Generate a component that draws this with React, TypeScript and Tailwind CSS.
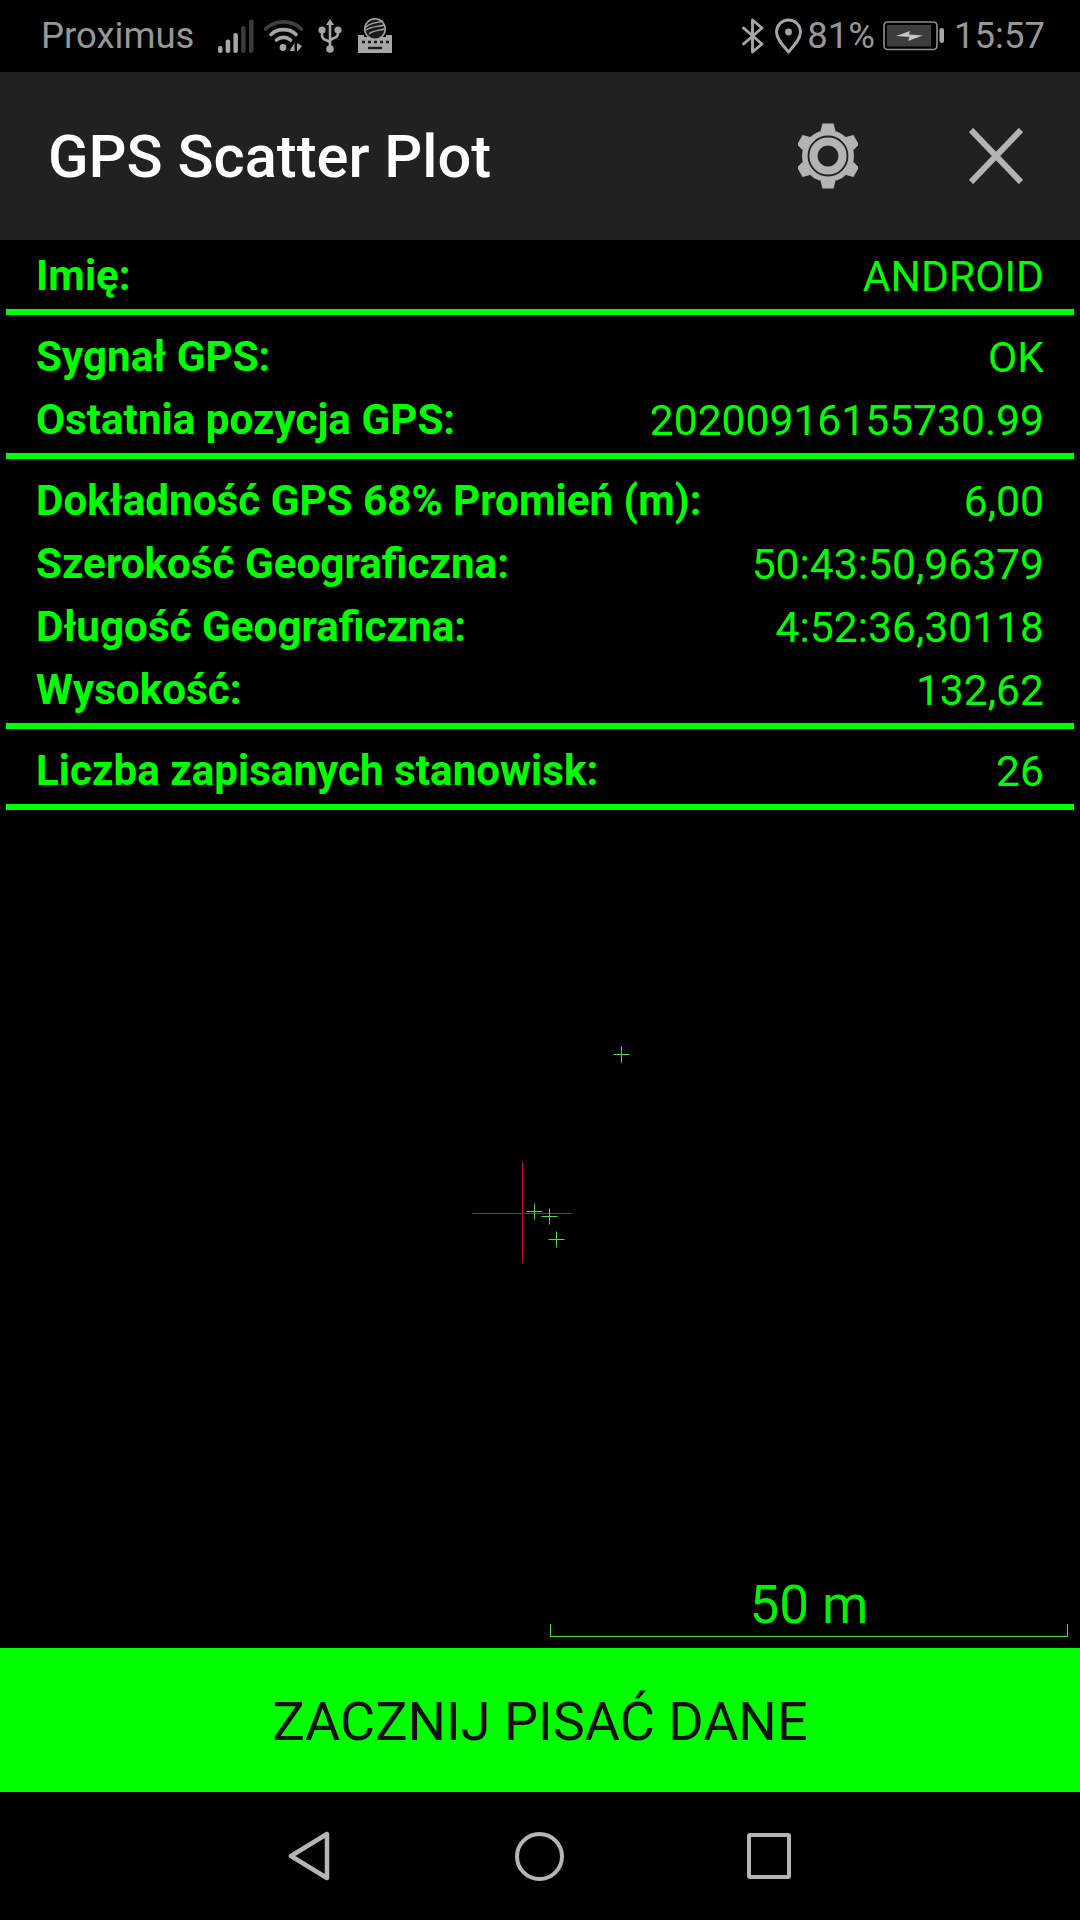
const font = { fontFamily: 'Roboto, sans-serif' };

function Row({ label, value }: { label: string; value: string }) {
  return (
    <div className="flex h-[63px] items-center justify-between pb-[2px] pl-[36px] pr-[36px]">
      <span className="text-[42.2px] font-bold leading-none text-[#00ff00]">{label}</span>
      <span className="text-[42.6px] font-normal leading-none text-[#00ff00]">{value}</span>
    </div>
  );
}

function Line() {
  return <div className="mx-[6px] h-[6px] bg-[#00ff00]" />;
}

function SignalIcon() {
  return (
    <svg width="36" height="36" viewBox="0 0 36 36" className="ml-[24px] shrink-0">
      <rect x="0" y="28" width="4.5" height="7" rx="2" fill="#a6a6a6" />
      <rect x="7.7" y="21.5" width="4.5" height="13.5" rx="2" fill="#a6a6a6" />
      <rect x="15.4" y="15" width="4.5" height="20" rx="2" fill="#a6a6a6" />
      <rect x="23.1" y="8" width="4.5" height="27" rx="2" fill="#3a3a3a" />
      <rect x="31" y="1.5" width="4.5" height="33.5" rx="2" fill="#3a3a3a" />
    </svg>
  );
}

function WifiIcon() {
  return (
    <svg width="39" height="34" viewBox="0 0 39 34" className="ml-[10px] shrink-0" fill="none">
      <path d="M1.5 10 C11 0.5 28 0.5 37.5 10" stroke="#3f3f3f" strokeWidth="3.6" strokeLinecap="round" />
      <path d="M7 15.5 C13.5 9 25.5 9 32 15.5" stroke="#a6a6a6" strokeWidth="3.6" strokeLinecap="round" />
      <path d="M12.5 21 C16.5 17.5 22.5 17.5 26.5 21" stroke="#a6a6a6" strokeWidth="3.6" strokeLinecap="round" />
      <circle cx="19" cy="28.5" r="3.4" fill="#a6a6a6" />
      <path d="M30.5 24 L30.5 32 L25.5 32 Z" fill="#a6a6a6" />
      <path d="M33 24 L33 33 L38 27 Z" fill="#a6a6a6" />
    </svg>
  );
}

function UsbIcon() {
  return (
    <svg width="24" height="36" viewBox="0 0 24 36" className="ml-[15px] shrink-0" fill="none">
      <path d="M12 1 L16 7 L8 7 Z" fill="#a6a6a6" />
      <path d="M12 6 V30" stroke="#a6a6a6" strokeWidth="2.6" />
      <path d="M4 13 V17 Q4 21 8 22 L12 24" stroke="#a6a6a6" strokeWidth="2.6" />
      <path d="M20 13 V15 Q20 19 16 20 L12 22" stroke="#a6a6a6" strokeWidth="2.6" />
      <circle cx="4" cy="12" r="3.6" fill="#a6a6a6" />
      <circle cx="20" cy="12" r="3.6" fill="#a6a6a6" />
      <circle cx="12" cy="31" r="3.8" fill="#a6a6a6" />
    </svg>
  );
}

function SwypeIcon() {
  return (
    <svg width="34" height="36" viewBox="0 0 34 36" className="ml-[16px] shrink-0" fill="none">
      <path d="M0 17 H6 V19 H28 V17 H34 V35 H0 Z" fill="#a6a6a6" />
      <circle cx="17" cy="11" r="11" fill="#a6a6a6" />
      <circle cx="17" cy="11" r="9.4" fill="#1a1a1a" />
      <path d="M8 9 C13 4 20 5 25 3 M8 12 C14 8 20 9 26 7 M11 16 C15 12 21 13 26 11" stroke="#a6a6a6" strokeWidth="1.4" />
      <path d="M4 24 h3 M10 24 h3 M16 24 h3 M22 24 h3 M28 24 h3" stroke="#1a1a1a" strokeWidth="2.4" />
      <path d="M10 30 H24" stroke="#1a1a1a" strokeWidth="2.4" />
    </svg>
  );
}

function BluetoothIcon() {
  return (
    <svg width="22" height="36" viewBox="0 0 22 36" className="shrink-0" fill="none">
      <path d="M1.5 10 L20 26 L10.5 34 V2 L20 10 L1.5 26" stroke="#a6a6a6" strokeWidth="2.9" strokeLinejoin="round" strokeLinecap="round" />
    </svg>
  );
}

function PinIcon() {
  return (
    <svg width="27" height="36" viewBox="0 0 27 36" className="ml-[11px] shrink-0" fill="none">
      <path d="M13.5 34 C8 27.5 1.5 21 1.5 14 A12 12 0 0 1 25.5 14 C25.5 21 19 27.5 13.5 34 Z" stroke="#a6a6a6" strokeWidth="2.9" strokeLinejoin="round" />
      <circle cx="13.5" cy="14" r="3.4" fill="#a6a6a6" />
    </svg>
  );
}

function BatteryIcon() {
  return (
    <svg width="61" height="30" viewBox="0 0 61 30" className="ml-[8px] shrink-0" fill="none">
      <rect x="1" y="1" width="53" height="27.5" rx="3.5" stroke="#8f8f8f" strokeWidth="1.6" />
      <rect x="4" y="4" width="44" height="21.5" fill="#3d3d3d" />
      <path d="M13 15 L27 10 L26 13.5 L40 14.5 L25 20 L26.5 16 Z" fill="#c4c4c4" />
      <rect x="56.5" y="7" width="4.5" height="15" rx="2" fill="#a6a6a6" />
    </svg>
  );
}

function GearIcon() {
  const teeth = [0, 60, 120, 180, 240, 300];
  return (
    <svg width="60" height="66" viewBox="-30 -33 60 66" className="shrink-0">
      {teeth.map((a) => (
        <path key={a} d="M-7.5 -25 L-5.5 -32.5 H5.5 L7.5 -25 Z" fill="#b3b3b3" transform={`rotate(${a})`} strokeLinejoin="round" />
      ))}
      <circle r="26" fill="#b3b3b3" />
      <circle r="19.5" fill="none" stroke="#212121" strokeWidth="1.8" />
      <circle r="10.5" fill="#212121" />
    </svg>
  );
}

function CloseIcon() {
  return (
    <svg width="54" height="56" viewBox="0 0 54 56" className="shrink-0" fill="none">
      <path d="M2 2 L52 54 M52 2 L2 54" stroke="#b3b3b3" strokeWidth="6" />
    </svg>
  );
}

function Plus({ x, y }: { x: number; y: number }) {
  return <path d={`M${x - 8} ${y} H${x + 8} M${x} ${y - 8} V${y + 8}`} stroke="#4fdc4f" strokeWidth="1" />;
}

function Plot() {
  return (
    <svg width="1080" height="838" viewBox="0 810 1080 838" className="absolute inset-0" fill="none">
      <path d="M472.5 1213.5 H572 M522.5 1162 V1263" stroke="#c8102e" strokeWidth="1" />
      <Plus x={621.5} y={1054.5} />
      <Plus x={534.5} y={1211.5} />
      <Plus x={549.5} y={1216.5} />
      <Plus x={556.5} y={1239.5} />
    </svg>
  );
}

export default function App() {
  return (
    <div className="flex h-[1920px] w-[1080px] flex-col overflow-hidden bg-black" style={font}>
      <div className="flex h-[72px] shrink-0 items-center pl-[41px] pr-[35px] text-[36.5px] leading-none text-[#979797]">
        <span>Proximus</span>
        <SignalIcon />
        <WifiIcon />
        <UsbIcon />
        <SwypeIcon />
        <div className="ml-auto flex items-center">
          <BluetoothIcon />
          <PinIcon />
          <span className="ml-[5px]">81%</span>
          <BatteryIcon />
          <span className="ml-[10px]">15:57</span>
        </div>
      </div>

      <div className="flex h-[168px] shrink-0 items-center bg-[#212121] pl-[48px] pr-[57px]">
        <span className="pt-[3px] text-[59.6px] font-medium leading-none text-white">GPS Scatter Plot</span>
        <div className="ml-auto mr-[111px]"><GearIcon /></div>
        <CloseIcon />
      </div>

      <div className="flex shrink-0 flex-col pt-[6px]">
        <Row label="Imię:" value="ANDROID" />
        <Line />
        <div className="h-[12px]" />
        <Row label="Sygnał GPS:" value="OK" />
        <Row label="Ostatnia pozycja GPS:" value="20200916155730.99" />
        <Line />
        <div className="h-[12px]" />
        <Row label="Dokładność GPS 68% Promień (m):" value="6,00" />
        <Row label="Szerokość Geograficzna:" value="50:43:50,96379" />
        <Row label="Długość Geograficzna:" value="4:52:36,30118" />
        <Row label="Wysokość:" value="132,62" />
        <Line />
        <div className="h-[12px]" />
        <Row label="Liczba zapisanych stanowisk:" value="26" />
        <Line />
      </div>

      <div className="relative flex min-h-0 flex-1 flex-col items-end justify-end pb-[11px] pr-[12px]">
        <Plot />
        <div className="relative flex w-[518px] flex-col items-center">
          <span className="text-[53px] leading-none text-[#00f000]">50 m</span>
          <div className="-mt-[8px] h-[13px] w-full border-x border-b border-[#4fdc4f]" />
        </div>
      </div>

      <div className="flex h-[144px] shrink-0 items-center justify-center bg-[#00ff00] pt-[3px] text-[54px] leading-none text-[#111111]">
        ZACZNIJ PISAĆ DANE
      </div>

      <div className="flex h-[128px] shrink-0 items-center pl-[288px]">
        <svg width="42" height="50" viewBox="0 0 42 50" fill="none" className="shrink-0">
          <path d="M39 3 V47 L3 25 Z" stroke="#b5b5b5" strokeWidth="4.5" strokeLinejoin="round" />
        </svg>
        <div className="ml-[185px] h-[49px] w-[49px] rounded-full border-[4px] border-[#b5b5b5]" />
        <div className="ml-[183px] h-[46px] w-[44px] rounded-[3px] border-[4px] border-[#b5b5b5]" />
      </div>
    </div>
  );
}
